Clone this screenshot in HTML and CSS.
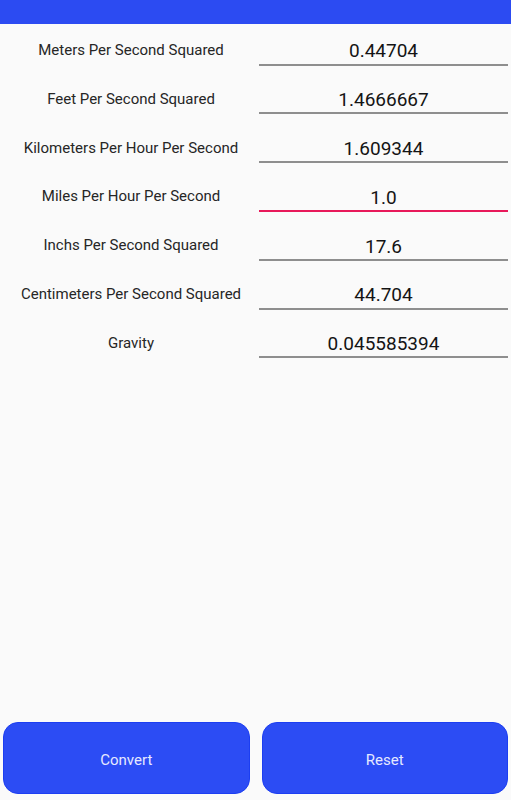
FILE: index.html
```html
<!DOCTYPE html>
<html lang="en">
<head>
<meta charset="utf-8">
<title>Acceleration Converter</title>
<link rel="stylesheet" href="styles.css">
</head>
<body>
<div class="app">
  <div class="status-bar"></div>
  <main class="form">
    <div class="row">
      <label class="label">Meters Per Second Squared</label>
      <input class="field" type="text" value="0.44704">
    </div>
    <div class="row">
      <label class="label">Feet Per Second Squared</label>
      <input class="field" type="text" value="1.4666667">
    </div>
    <div class="row">
      <label class="label">Kilometers Per Hour Per Second</label>
      <input class="field" type="text" value="1.609344">
    </div>
    <div class="row">
      <label class="label">Miles Per Hour Per Second</label>
      <input class="field field-focused" type="text" value="1.0">
    </div>
    <div class="row">
      <label class="label">Inchs Per Second Squared</label>
      <input class="field" type="text" value="17.6">
    </div>
    <div class="row">
      <label class="label">Centimeters Per Second Squared</label>
      <input class="field" type="text" value="44.704">
    </div>
    <div class="row">
      <label class="label">Gravity</label>
      <input class="field" type="text" value="0.045585394">
    </div>
  </main>
  <div class="actions">
    <button class="btn" type="button">Convert</button>
    <button class="btn" type="button">Reset</button>
  </div>
</div>
</body>
</html>
```
FILE: styles.css
```css
* { box-sizing: border-box; }
html, body {
  margin: 0;
  padding: 0;
  background: #fafafa;
}
body {
  font-family: Roboto, "Noto Sans", "Liberation Sans", sans-serif;
}
.app {
  display: flex;
  flex-direction: column;
  height: 800px;
}
.status-bar {
  height: 24px;
  background: #2c4bf2;
  flex: none;
}
.form {
  display: flex;
  flex-direction: column;
  padding-right: 3px;
}
.row {
  display: grid;
  grid-template-columns: 259px 1fr;
  height: 48.83px;
}
.label {
  font-size: 15px;
  color: #262626;
  text-align: center;
  line-height: 16px;
  padding: 18px 0 0 3px;
  white-space: nowrap;
}
.field {
  display: block;
  width: 100%;
  height: 41.5px;
  margin: 0;
  padding: 15px 0 1px;
  border: none;
  border-bottom: 2px solid #8e8e8e;
  background: transparent;
  font-family: Roboto, "Noto Sans", "Liberation Sans", sans-serif;
  font-size: 19px;
  line-height: 22px;
  color: #141414;
  text-align: center;
  outline: none;
}
.field-focused {
  border-bottom-color: #e8195a;
}
.actions {
  margin-top: auto;
  display: grid;
  grid-template-columns: 1fr 1fr;
  gap: 12px;
  padding: 0 3px 6px;
}
.btn {
  height: 72px;
  border: 1px solid #1c3ef2;
  border-radius: 15px;
  background: #2c4cf4;
  color: #e6e9ff;
  font-family: Roboto, "Noto Sans", "Liberation Sans", sans-serif;
  font-size: 15px;
  font-weight: 400;
  padding: 3px 0 0;
  cursor: pointer;
}
```
